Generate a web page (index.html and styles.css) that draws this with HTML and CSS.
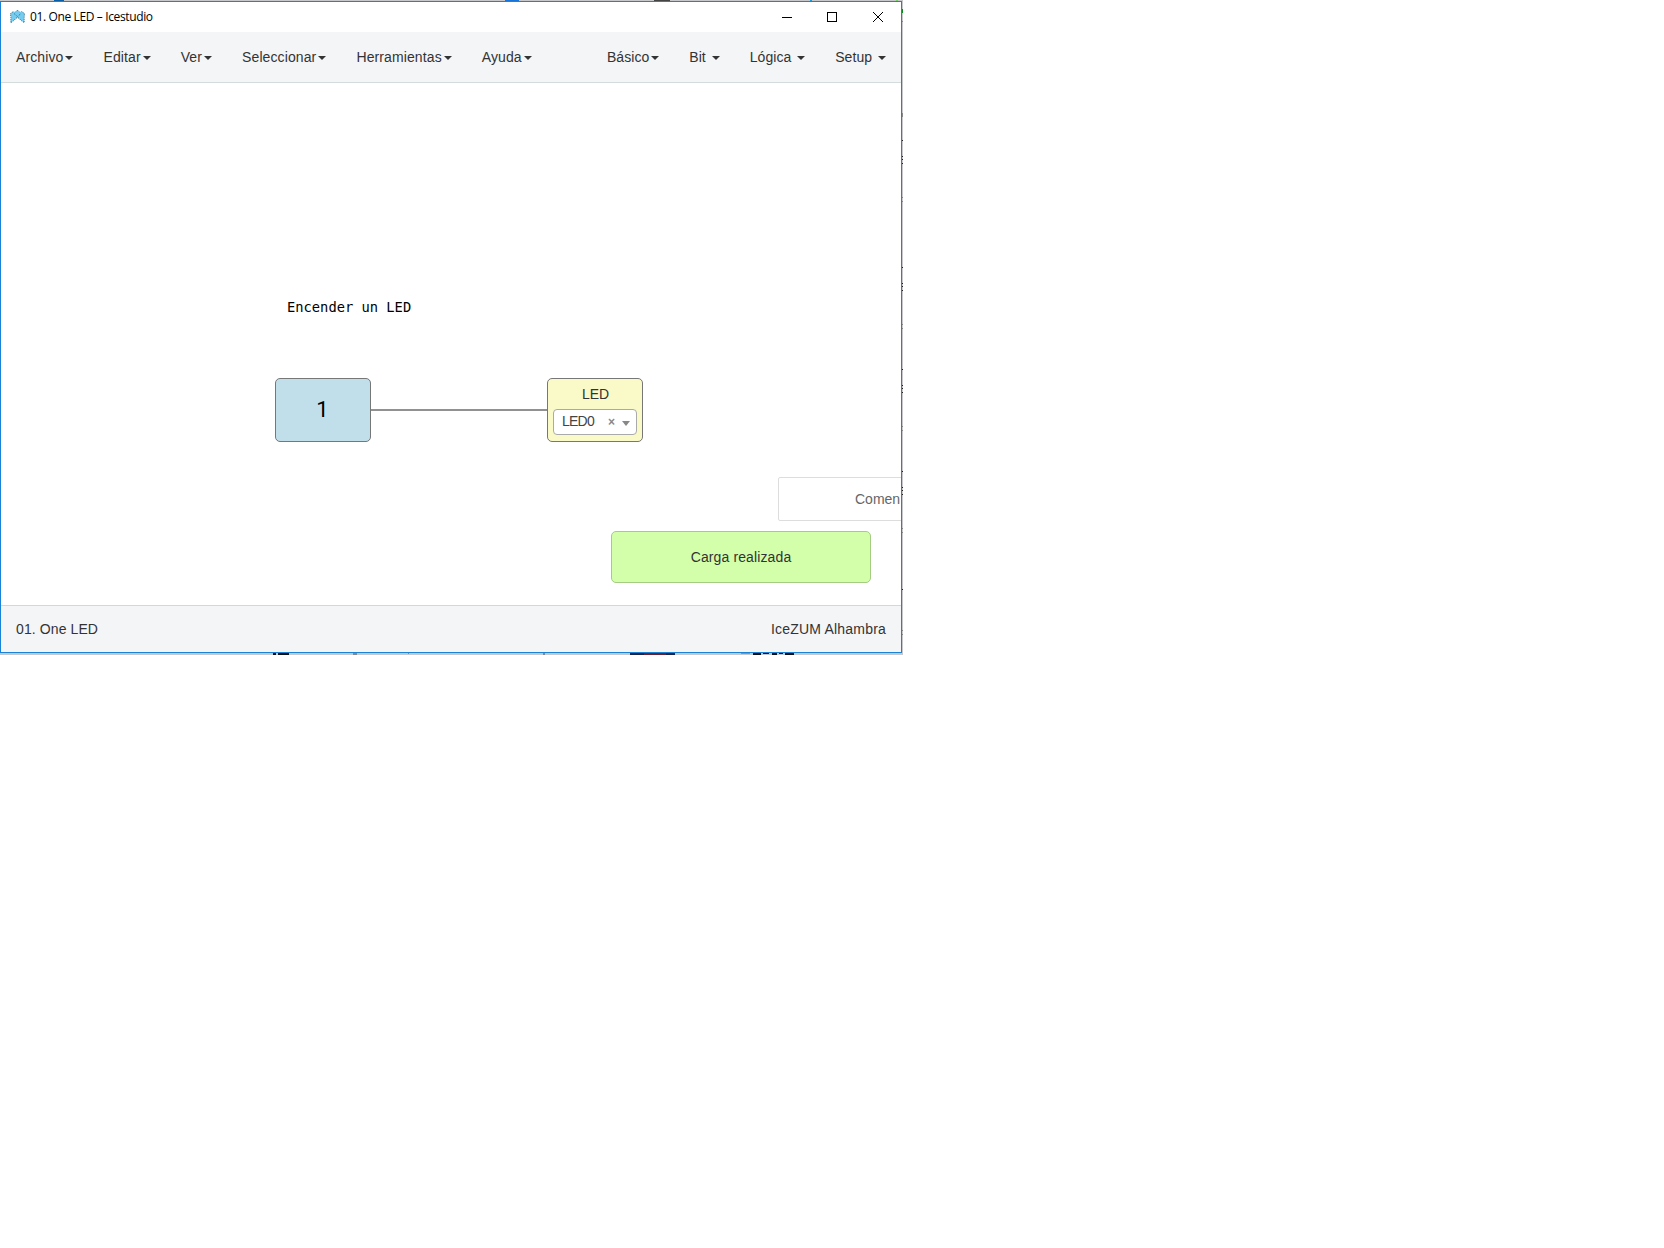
FILE: index.html
```html
<!DOCTYPE html>
<html lang="es">
<head>
<meta charset="utf-8">
<title>01. One LED – Icestudio</title>
<link rel="stylesheet" href="styles.css">
</head>
<body>
<div class="desktop">
  <svg class="backdrop" width="903" height="655" shape-rendering="crispEdges" aria-hidden="true">
    <path fill="#0a5ea8" d="M54 0h10v1H54z"/>
    <path fill="#1874d8" d="M505 0h14v1h-14z"/>
    <path fill="#444" d="M654 0h16v1h-16z"/>
    <path fill="#1a9ad6" d="M810 0h2v1h-2z"/>
    <path fill="#7ccf6a" d="M896 0h2v1h-2z"/>
    <path fill="#0a8a1a" d="M902 9h1v4h-1z"/>
    <path fill="#222" d="M902 140h1v1h-1zM902 156h1v1h-1zM902 159h1v1h-1zM902 163h1v1h-1zM902 267h1v1h-1zM902 283h1v1h-1zM902 286h1v1h-1zM902 290h1v1h-1zM902 369h1v1h-1zM902 385h1v1h-1zM902 388h1v1h-1zM902 392h1v1h-1zM902 471h1v1h-1zM902 487h1v1h-1zM902 490h1v1h-1zM902 494h1v1h-1zM902 589h1v1h-1z"/>
    <path fill="#888" d="M902 21h1v1h-1zM902 113h1v4h-1zM902 197h1v1h-1zM902 201h1v1h-1zM902 324h1v1h-1zM902 328h1v1h-1zM902 426h1v1h-1zM902 430h1v1h-1zM902 528h1v1h-1zM902 532h1v1h-1zM902 630h1v1h-1zM902 634h1v1h-1zM353 653h4v2h-4zM408 653h1v1h-1zM543 653h2v2h-2z"/>
    <path fill="#111" d="M273 653h3v2h-3zM278 653h11v2h-11zM753 653h8v2h-8zM763 653h6v1h-6zM772 653h5v2h-5zM779 653h4v1h-4zM785 653h9v2h-9z"/>
    <path fill="#1c2345" d="M630 653h45v2h-45z"/>
    <path fill="#6b2230" d="M644 653h22v2h-22z"/>
    <path fill="#8795a5" d="M741 653h9v1h-9z"/>
  </svg>
  <div class="window">
    <header class="titlebar">
      <svg class="logo" width="15" height="13" viewBox="0 0 15 13" aria-hidden="true">
        <path d="M.5 3.500 3.500 1.500 5.500 2 7 .5h1L9.500 2l2-.5 3 2-.5 4 .5 5L10.500 10 9 8H6l-1.500 2-4 2.500L1 7.500z" fill="#74cdf0"/>
        <path d="M1 12.500.8 7.500.5 3.500 3.500 1.500M5.500 1.800 7 .5h1L9.500 1.800M11.500 1.500l3 2-.3 4-.2 5M1 12.500 4.500 10 6 8h3l1.500 2 3.500 2.500M4 3.500 7.500 6.500 11 3.500" fill="none" stroke="#326b86" stroke-width=".9" stroke-dasharray="1.200 1"/>
      </svg>
      <span class="caption">01. One LED – Icestudio</span>
      <svg class="controls" width="102" height="12" viewBox="0 0 102 12" fill="none" stroke="#000" aria-hidden="true">
        <path d="M0 6.500h10M45.500 1.500h9v9h-9z" shape-rendering="crispEdges"/>
        <path d="M91 1l10 10M101 1 91 11"/>
      </svg>
    </header>
    <nav class="menubar">
      <div class="menu main-menu">
        <a>Archivo<i class="caret"></i></a>
        <a>Editar<i class="caret"></i></a>
        <a>Ver<i class="caret"></i></a>
        <a>Seleccionar<i class="caret"></i></a>
        <a>Herramientas<i class="caret"></i></a>
        <a>Ayuda<i class="caret"></i></a>
      </div>
      <div class="menu block-menu">
        <a>Básico<i class="caret"></i></a>
        <a>Bit <i class="caret"></i></a>
        <a>Lógica <i class="caret"></i></a>
        <a>Setup <i class="caret"></i></a>
      </div>
    </nav>
    <main class="canvas">
      <div class="note">Encender un LED</div>
      <div class="wire"></div>
      <div class="block constant">1</div>
      <div class="block output">
        <span class="label">LED</span>
        <div class="select"><span class="value">LED0</span><span class="clear">×</span><i class="arrow"></i></div>
      </div>
      <div class="comment">Comen</div>
      <div class="toast">Carga realizada</div>
    </main>
    <footer class="statusbar"><span class="project">01. One LED</span><span class="board">IceZUM Alhambra</span></footer>
  </div>
</div>
</body>
</html>
```
FILE: styles.css
```css
* { box-sizing: border-box; }
body {
  margin: 0;
  background: #fff;
  color: #333;
  font: 14px/20px "Liberation Sans", Arial, sans-serif;
}
.desktop {
  position: relative;
  width: 903px;
  height: 655px;
  padding: 1px 1px 2px 0;
  background: #c6c8cb;
}
.backdrop { position: absolute; left: 0; top: 0; }
.window {
  position: relative;
  display: flex;
  flex-direction: column;
  width: 902px;
  height: 652px;
  border: 1px solid #1883d7;
  background: #fff;
}
.titlebar {
  display: flex;
  align-items: center;
  height: 30px;
  padding: 0 17px 0 9px;
}
.logo { margin: -1px 0 0 -.5px; }
.caption {
  margin-left: 5.5px;
  color: #000;
  font: 12px/16px "Open Sans", sans-serif;
  letter-spacing: -.37px;
}
.controls { margin: -1px 0 0 auto; }
.menubar {
  display: flex;
  justify-content: space-between;
  height: 51px;
  padding: 15px 15px 0;
  background: #f4f5f7;
  border-bottom: 1px solid #d3dbdd;
}
.menu { display: flex; gap: 30px; }
.menu a { white-space: pre; }
.main-menu { letter-spacing: .11px; }
.block-menu { letter-spacing: .05px; }
.caret {
  display: inline-block;
  margin-left: 2px;
  vertical-align: middle;
  border: 4px solid transparent;
  border-top-color: #333;
  border-bottom: 0;
}
.canvas { position: relative; flex: 1; overflow: hidden; }
.note {
  position: absolute;
  left: 286px;
  top: 214px;
  color: #000;
  font: 13.75px/20px "DejaVu Sans Mono", monospace;
}
.block {
  position: absolute;
  top: 295px;
  width: 96px;
  height: 64px;
  border: 1px solid #777;
  border-radius: 5px;
  text-align: center;
}
.constant {
  left: 274px;
  padding-right: 1px;
  background: #c0dfea;
  color: #000;
  font-family: Roboto, sans-serif;
  font-size: 22px;
  line-height: 62px;
}
.output { left: 546px; padding: 5px; background: #fafac8; }
.label { display: block; height: 25px; padding-left: 1px; }
.wire {
  position: absolute;
  left: 370px;
  top: 326px;
  width: 176px;
  height: 2px;
  background: #919191;
}
.select {
  display: flex;
  align-items: center;
  height: 26px;
  padding: 0 6px 2px 8px;
  border: 1px solid #aaa;
  border-radius: 4px;
  background: #fff;
  color: #444;
}
.value { letter-spacing: -.75px; }
.clear { margin: 1px 0 0 auto; font-size: 12px; font-weight: bold; color: #888; }
.arrow {
  margin: 4px 0 0 7px;
  border: 4px solid transparent;
  border-top: 5px solid #888;
  border-bottom: 0;
}
.comment {
  position: absolute;
  left: 777px;
  top: 394px;
  width: 260px;
  height: 44px;
  padding-left: 76px;
  border: 1px solid #ddd;
  border-radius: 2px;
  background: #fff;
  color: #666;
  line-height: 42px;
}
.toast {
  position: absolute;
  left: 610px;
  top: 448px;
  width: 260px;
  height: 52px;
  border: 1px solid #a5cc84;
  border-radius: 5px;
  background: #d3ffab;
  line-height: 50px;
  text-align: center;
  letter-spacing: .12px;
}
.statusbar {
  display: flex;
  justify-content: space-between;
  height: 47px;
  padding: 13px 15px 0;
  background: #f4f5f7;
  border-top: 1px solid #d3d7d9;
}
.project { letter-spacing: .1px; }
.board { letter-spacing: .2px; }
```
